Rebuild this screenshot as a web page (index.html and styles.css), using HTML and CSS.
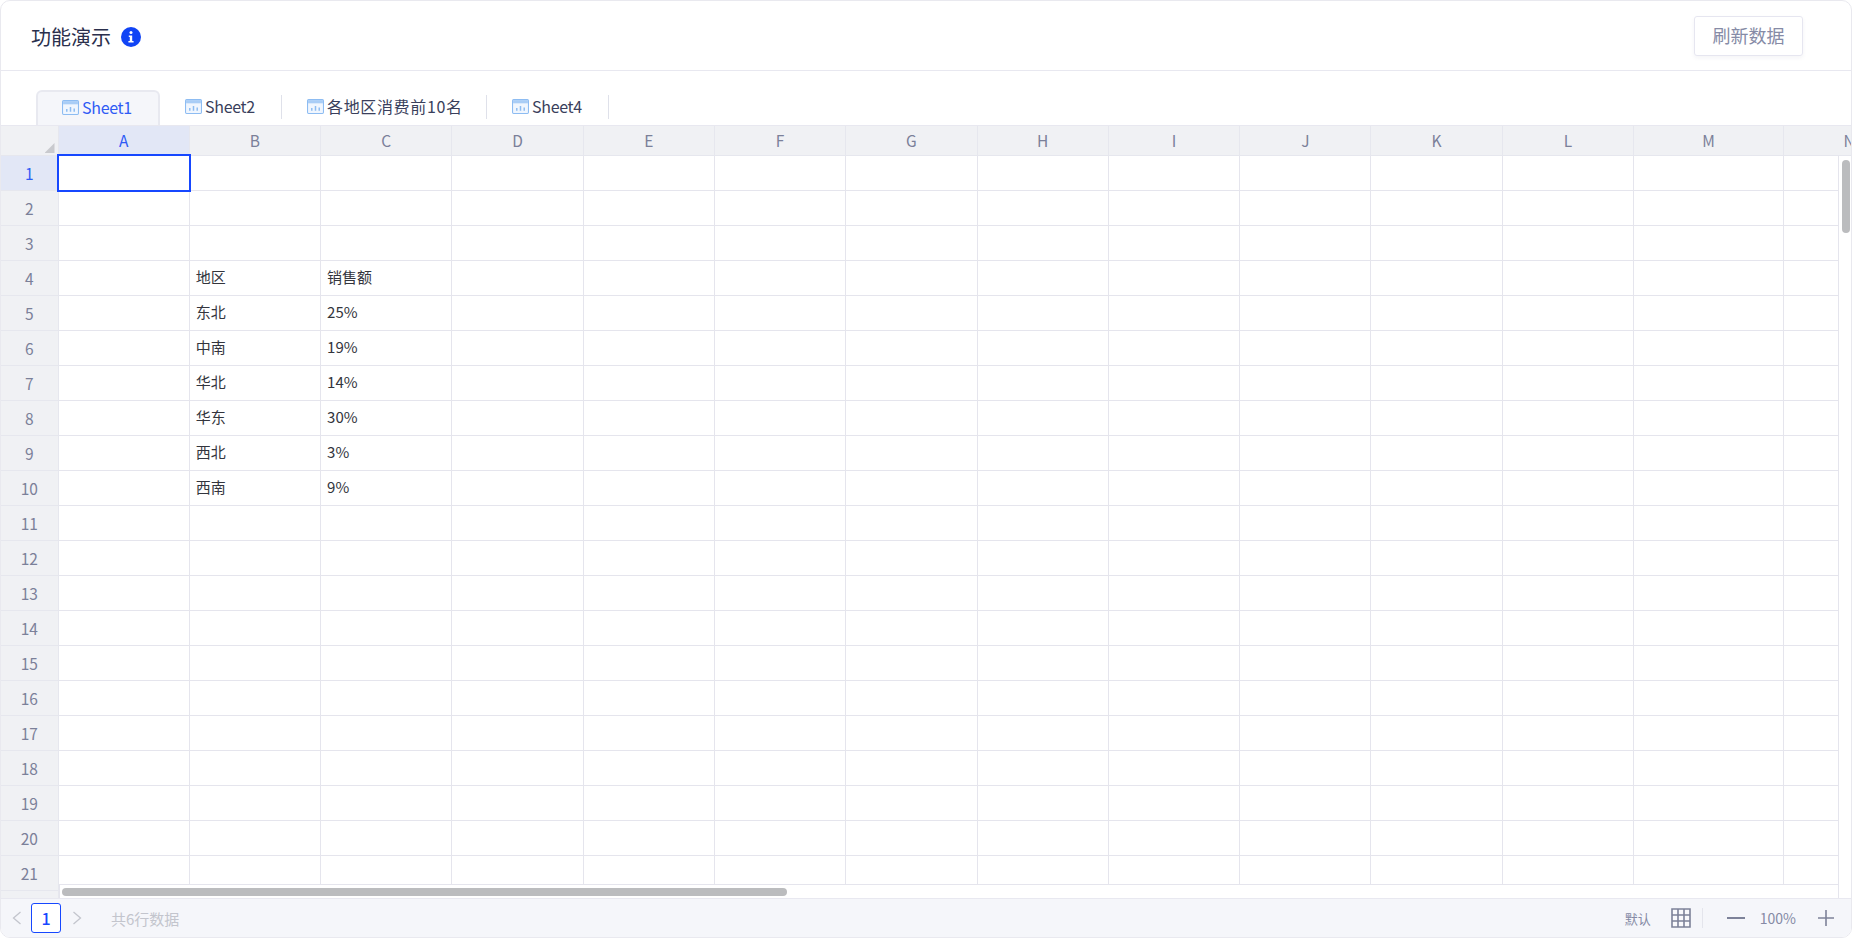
FILE: index.html
```html
<!DOCTYPE html>
<html lang="zh-CN">
<head>
<meta charset="utf-8">
<title>功能演示</title>
<link rel="stylesheet" href="styles.css">
</head>
<body>
<main class="card">
  <header class="topbar">
    <div class="title-wrap">
      <h1 class="title">功能演示</h1>
      <svg class="info" viewBox="0 0 20 20"><circle cx="10" cy="10" r="10" fill="#1144f5"/><circle cx="10" cy="5.6" r="1.5" fill="#fff"/><path d="M7.8 8.4h3.4v5.6h1.4v1.6H7.4V14h1.4v-4H7.8z" fill="#fff"/></svg>
    </div>
    <button class="refresh">刷新数据</button>
  </header>

  <nav class="tabs">
    <div class="tab tab-active"><svg class="sheet-icon" viewBox="0 0 16 14"><rect x=".5" y=".5" width="15" height="13" rx="1" fill="#f0f6fe" stroke="#8dbcf2"/><rect x="1" y="1" width="14" height="3" fill="#a9cdf6"/><path d="M4.5 11V8.5M8 11V6.5M11.500 11V8" stroke="#8dbcf2" stroke-width="1.400"/></svg><span class="tab-label">Sheet1</span></div>
    <div class="tab"><svg class="sheet-icon" viewBox="0 0 16 14"><rect x=".5" y=".5" width="15" height="13" rx="1" fill="#f0f6fe" stroke="#8dbcf2"/><rect x="1" y="1" width="14" height="3" fill="#a9cdf6"/><path d="M4.5 11V8.5M8 11V6.5M11.500 11V8" stroke="#8dbcf2" stroke-width="1.400"/></svg><span class="tab-label">Sheet2</span></div>
    <div class="tab tab-wide"><svg class="sheet-icon" viewBox="0 0 16 14"><rect x=".5" y=".5" width="15" height="13" rx="1" fill="#f0f6fe" stroke="#8dbcf2"/><rect x="1" y="1" width="14" height="3" fill="#a9cdf6"/><path d="M4.5 11V8.5M8 11V6.5M11.500 11V8" stroke="#8dbcf2" stroke-width="1.400"/></svg><span class="tab-label">各地区消费前10名</span></div>
    <div class="tab"><svg class="sheet-icon" viewBox="0 0 16 14"><rect x=".5" y=".5" width="15" height="13" rx="1" fill="#f0f6fe" stroke="#8dbcf2"/><rect x="1" y="1" width="14" height="3" fill="#a9cdf6"/><path d="M4.5 11V8.5M8 11V6.5M11.500 11V8" stroke="#8dbcf2" stroke-width="1.400"/></svg><span class="tab-label">Sheet4</span></div>
  </nav>

  <section class="sheet-wrap">
    <div class="sheet">
      <div class="ch corner"></div><div class="ch ch-active">A</div><div class="ch">B</div><div class="ch">C</div><div class="ch">D</div><div class="ch">E</div><div class="ch">F</div><div class="ch">G</div><div class="ch">H</div><div class="ch">I</div><div class="ch">J</div><div class="ch">K</div><div class="ch">L</div><div class="ch">M</div><div class="ch">N</div>
      <div class="rh rh-active">1</div><div class="c c-selected"></div><div class="c"></div><div class="c"></div><div class="c"></div><div class="c"></div><div class="c"></div><div class="c"></div><div class="c"></div><div class="c"></div><div class="c"></div><div class="c"></div><div class="c"></div><div class="c"></div><div class="c"></div>
      <div class="rh">2</div><div class="c"></div><div class="c"></div><div class="c"></div><div class="c"></div><div class="c"></div><div class="c"></div><div class="c"></div><div class="c"></div><div class="c"></div><div class="c"></div><div class="c"></div><div class="c"></div><div class="c"></div><div class="c"></div>
      <div class="rh">3</div><div class="c"></div><div class="c"></div><div class="c"></div><div class="c"></div><div class="c"></div><div class="c"></div><div class="c"></div><div class="c"></div><div class="c"></div><div class="c"></div><div class="c"></div><div class="c"></div><div class="c"></div><div class="c"></div>
      <div class="rh">4</div><div class="c"></div><div class="c">地区</div><div class="c">销售额</div><div class="c"></div><div class="c"></div><div class="c"></div><div class="c"></div><div class="c"></div><div class="c"></div><div class="c"></div><div class="c"></div><div class="c"></div><div class="c"></div><div class="c"></div>
      <div class="rh">5</div><div class="c"></div><div class="c">东北</div><div class="c">25%</div><div class="c"></div><div class="c"></div><div class="c"></div><div class="c"></div><div class="c"></div><div class="c"></div><div class="c"></div><div class="c"></div><div class="c"></div><div class="c"></div><div class="c"></div>
      <div class="rh">6</div><div class="c"></div><div class="c">中南</div><div class="c">19%</div><div class="c"></div><div class="c"></div><div class="c"></div><div class="c"></div><div class="c"></div><div class="c"></div><div class="c"></div><div class="c"></div><div class="c"></div><div class="c"></div><div class="c"></div>
      <div class="rh">7</div><div class="c"></div><div class="c">华北</div><div class="c">14%</div><div class="c"></div><div class="c"></div><div class="c"></div><div class="c"></div><div class="c"></div><div class="c"></div><div class="c"></div><div class="c"></div><div class="c"></div><div class="c"></div><div class="c"></div>
      <div class="rh">8</div><div class="c"></div><div class="c">华东</div><div class="c">30%</div><div class="c"></div><div class="c"></div><div class="c"></div><div class="c"></div><div class="c"></div><div class="c"></div><div class="c"></div><div class="c"></div><div class="c"></div><div class="c"></div><div class="c"></div>
      <div class="rh">9</div><div class="c"></div><div class="c">西北</div><div class="c">3%</div><div class="c"></div><div class="c"></div><div class="c"></div><div class="c"></div><div class="c"></div><div class="c"></div><div class="c"></div><div class="c"></div><div class="c"></div><div class="c"></div><div class="c"></div>
      <div class="rh">10</div><div class="c"></div><div class="c">西南</div><div class="c">9%</div><div class="c"></div><div class="c"></div><div class="c"></div><div class="c"></div><div class="c"></div><div class="c"></div><div class="c"></div><div class="c"></div><div class="c"></div><div class="c"></div><div class="c"></div>
      <div class="rh">11</div><div class="c"></div><div class="c"></div><div class="c"></div><div class="c"></div><div class="c"></div><div class="c"></div><div class="c"></div><div class="c"></div><div class="c"></div><div class="c"></div><div class="c"></div><div class="c"></div><div class="c"></div><div class="c"></div>
      <div class="rh">12</div><div class="c"></div><div class="c"></div><div class="c"></div><div class="c"></div><div class="c"></div><div class="c"></div><div class="c"></div><div class="c"></div><div class="c"></div><div class="c"></div><div class="c"></div><div class="c"></div><div class="c"></div><div class="c"></div>
      <div class="rh">13</div><div class="c"></div><div class="c"></div><div class="c"></div><div class="c"></div><div class="c"></div><div class="c"></div><div class="c"></div><div class="c"></div><div class="c"></div><div class="c"></div><div class="c"></div><div class="c"></div><div class="c"></div><div class="c"></div>
      <div class="rh">14</div><div class="c"></div><div class="c"></div><div class="c"></div><div class="c"></div><div class="c"></div><div class="c"></div><div class="c"></div><div class="c"></div><div class="c"></div><div class="c"></div><div class="c"></div><div class="c"></div><div class="c"></div><div class="c"></div>
      <div class="rh">15</div><div class="c"></div><div class="c"></div><div class="c"></div><div class="c"></div><div class="c"></div><div class="c"></div><div class="c"></div><div class="c"></div><div class="c"></div><div class="c"></div><div class="c"></div><div class="c"></div><div class="c"></div><div class="c"></div>
      <div class="rh">16</div><div class="c"></div><div class="c"></div><div class="c"></div><div class="c"></div><div class="c"></div><div class="c"></div><div class="c"></div><div class="c"></div><div class="c"></div><div class="c"></div><div class="c"></div><div class="c"></div><div class="c"></div><div class="c"></div>
      <div class="rh">17</div><div class="c"></div><div class="c"></div><div class="c"></div><div class="c"></div><div class="c"></div><div class="c"></div><div class="c"></div><div class="c"></div><div class="c"></div><div class="c"></div><div class="c"></div><div class="c"></div><div class="c"></div><div class="c"></div>
      <div class="rh">18</div><div class="c"></div><div class="c"></div><div class="c"></div><div class="c"></div><div class="c"></div><div class="c"></div><div class="c"></div><div class="c"></div><div class="c"></div><div class="c"></div><div class="c"></div><div class="c"></div><div class="c"></div><div class="c"></div>
      <div class="rh">19</div><div class="c"></div><div class="c"></div><div class="c"></div><div class="c"></div><div class="c"></div><div class="c"></div><div class="c"></div><div class="c"></div><div class="c"></div><div class="c"></div><div class="c"></div><div class="c"></div><div class="c"></div><div class="c"></div>
      <div class="rh">20</div><div class="c"></div><div class="c"></div><div class="c"></div><div class="c"></div><div class="c"></div><div class="c"></div><div class="c"></div><div class="c"></div><div class="c"></div><div class="c"></div><div class="c"></div><div class="c"></div><div class="c"></div><div class="c"></div>
      <div class="rh">21</div><div class="c"></div><div class="c"></div><div class="c"></div><div class="c"></div><div class="c"></div><div class="c"></div><div class="c"></div><div class="c"></div><div class="c"></div><div class="c"></div><div class="c"></div><div class="c"></div><div class="c"></div><div class="c"></div>
      <div class="rh"></div><div class="c"></div><div class="c"></div><div class="c"></div><div class="c"></div><div class="c"></div><div class="c"></div><div class="c"></div><div class="c"></div><div class="c"></div><div class="c"></div><div class="c"></div><div class="c"></div><div class="c"></div><div class="c"></div>
    </div>
    <div class="vscroll"><div class="vthumb"></div></div>
    <div class="hscroll"><div class="hthumb"></div></div>
  </section>

  <footer class="statusbar">
    <div class="pager">
      <svg class="chev chev-prev" viewBox="0 0 10 14"><path d="M8.500 1L1.500 7l7 6" fill="none" stroke="#c3c5cd" stroke-width="1.300"/></svg>
      <span class="page">1</span>
      <svg class="chev chev-next" viewBox="0 0 10 14"><path d="M1.500 1l7 6-7 6" fill="none" stroke="#c3c5cd" stroke-width="1.300"/></svg>
      <span class="count">共6行数据</span>
    </div>
    <div class="viewbar">
      <span class="view-label">默认</span>
      <svg class="grid-icon" viewBox="0 0 20 20"><path d="M1 1h18v18H1zM7 1v18M13 1v18M1 7h18M1 13h18" fill="#f9f9fc" stroke="#7d8299" stroke-width="1.600"/></svg>
      <span class="vdivider"></span>
      <svg class="minus" viewBox="0 0 18 2"><rect width="18" height="2" fill="#7d8299"/></svg>
      <span class="zoom-value">100%</span>
      <svg class="plus" viewBox="0 0 16 16"><path d="M0 8h16M8 0v16" stroke="#7d8299" stroke-width="1.600"/></svg>
    </div>
  </footer>
</main>
</body>
</html>
```

FILE: styles.css
```css
* { box-sizing: border-box; }
html, body { margin: 0; height: 100%; background: #fff; }
body { font-family: "Noto Sans CJK SC", "Noto Sans", sans-serif; overflow: hidden; }

.card {
  height: 938px;
  display: flex;
  flex-direction: column;
  border: 1px solid #e9e9ef;
  border-radius: 10px;
  overflow: hidden;
  background: #fff;
}

.topbar {
  flex: none;
  height: 70px;
  display: flex;
  align-items: center;
  justify-content: space-between;
  padding: 2px 48px 0 30px;
  border-bottom: 1px solid #e8e8f0;
}
.title-wrap { display: flex; align-items: center; gap: 10px; }
.title { margin: 0; font-size: 20px; font-weight: 400; line-height: 28px; color: #2a2f4c; }
.info { width: 20px; height: 20px; display: block; }
.refresh {
  width: 109px;
  height: 40px;
  margin-bottom: 2px;
  padding: 0 0 1px;
  font: inherit;
  font-size: 18px;
  line-height: 26px;
  color: #868ba6;
  background: #fff;
  border: 1px solid #e6e6f0;
  border-radius: 3px;
  box-shadow: 0 2px 4px rgba(30, 40, 90, .05);
}

.tabs {
  flex: none;
  height: 54px;
  display: flex;
  align-items: flex-end;
  padding-left: 35px;
}
.tab {
  position: relative;
  width: 122px;
  height: 35px;
  display: flex;
  align-items: center;
  gap: 3px;
  padding: 0 0 2px 25px;
  font-size: 16px;
  color: #3a3f5c;
}
.tab-label { padding-bottom: 2px; letter-spacing: -.3px; }
.tab-wide .tab-label { letter-spacing: .65px; }
.tab::after {
  content: "";
  position: absolute;
  right: 0;
  top: 5px;
  height: 24px;
  border-right: 1px solid #dfe1ea;
}
.tab-wide { width: 205px; }
.tab-active {
  width: 124px;
  color: #2f5bf5;
  background: #f5f6fa;
  border: 2px solid #e8e9f0;
  border-bottom: 0;
  border-radius: 6px 6px 0 0;
}
.tab-active .sheet-icon { margin-left: -1px; }
.tab-active::after { display: none; }
.sheet-icon { width: 17px; height: 15px; flex: none; display: block; }

.sheet-wrap {
  position: relative;
  flex: none;
  height: 773px;
  overflow: hidden;
  border-top: 1px solid #e8e8f0;
}
.sheet {
  display: grid;
  grid-template-columns: 57.5px repeat(12, 131.3px) 150px 131px;
  grid-template-rows: 30px;
  grid-auto-rows: 35px;
  width: max-content;
}
.ch, .rh {
  display: flex;
  align-items: center;
  justify-content: center;
  padding-bottom: 1px;
  font-size: 15.5px;
  color: #7b8099;
  background: #f0f1f4;
  border-right: 1px solid #e6e7ee;
  border-bottom: 1px solid #e6e7ee;
}
.ch-active, .rh-active { background: #e2e7f6; color: #2f5bf5; }
.corner { position: relative; }
.corner::after {
  content: "";
  position: absolute;
  right: 3px;
  bottom: 2px;
  width: 10px;
  height: 10px;
  background: #c9cace;
  clip-path: polygon(100% 0, 100% 100%, 0 100%);
}
.c {
  display: flex;
  align-items: center;
  padding: 0 0 3px 6px;
  font-size: 15px;
  color: #33353d;
  border-right: 1px solid #e5e5ed;
  border-bottom: 1px solid #e5e5ed;
}
.c-selected { position: relative; }
.c-selected::after {
  content: "";
  position: absolute;
  left: -2px;
  top: -2px;
  right: -2px;
  bottom: -2px;
  border: 2.500px solid #1647ff;
}

.vscroll {
  position: absolute;
  top: 30px;
  right: 0;
  bottom: 0;
  width: 13px;
  background: #fff;
  border-left: 1px solid #e5e5ed;
}
.vthumb {
  position: absolute;
  top: 4px;
  left: 3px;
  width: 8px;
  height: 73px;
  border-radius: 4px;
  background: #bbbcbe;
}
.hscroll {
  position: absolute;
  left: 58px;
  right: 13px;
  bottom: 0;
  height: 14px;
  background: #fff;
  border-top: 1px solid #e5e5ed;
  border-left: 1px solid #e5e5ed;
}
.hthumb {
  position: absolute;
  left: 2px;
  top: 3px;
  width: 725px;
  height: 8px;
  border-radius: 4px;
  background: #bbbcbe;
}

.statusbar {
  flex: 1;
  min-height: 0;
  display: flex;
  align-items: center;
  justify-content: space-between;
  background: #f5f6fa;
  border-top: 1px solid #e8e8f0;
  padding: 0 17px 0 11px;
}
.pager, .viewbar { display: flex; align-items: center; }
.chev { width: 10px; height: 14px; display: block; }
.page {
  width: 30px;
  height: 30px;
  margin: 0 11px 0 9px;
  display: flex;
  align-items: center;
  justify-content: center;
  font-size: 16px;
  font-weight: 500;
  color: #1647ff;
  background: #fff;
  border: 1px solid #1647ff;
  border-radius: 3px;
}
.count { margin-left: 29px; font-size: 15px; color: #c3c5cd; }
.view-label { font-size: 13px; color: #858aa5; }
.grid-icon { width: 20px; height: 20px; margin-left: 20px; display: block; }
.vdivider { width: 1px; height: 20px; margin: 0 24px 0 11px; background: #e4e5ec; }
.minus { width: 18px; height: 2px; display: block; }
.zoom-value { margin: 0 22px 0 15px; font-size: 14px; color: #858aa5; }
.plus { width: 16px; height: 16px; display: block; }
```
